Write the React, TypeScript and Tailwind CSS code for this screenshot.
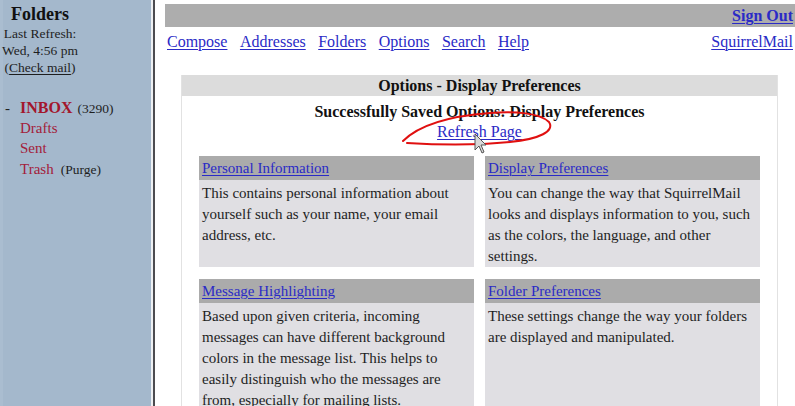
import React from "react";

const link = "text-[#2a2ac6] underline underline-offset-[2px] decoration-1";

function Card({ title, children }: { title: string; children: React.ReactNode }) {
  return (
    <div className="flex flex-col">
      <div className="h-[24px] shrink-0 bg-[#ababab] pl-[3px] flex items-center">
        <span className={link + " text-[15px] leading-[18px]"}>{title}</span>
      </div>
      <div className="flex-1 bg-[#e0dfe3] px-[3px] pt-[3px] text-[15px] leading-[21px] text-[#1e1e1e]">
        {children}
      </div>
    </div>
  );
}

export default function App() {
  return (
    <div className="relative w-[795px] h-[406px] overflow-hidden bg-white font-['Liberation_Serif','Times_New_Roman',serif] text-[#1e1e1e]">
      <div className="flex h-full">
        {/* Sidebar */}
        <div className="w-[151px] shrink-0 h-full bg-[#a4b8cc] border-l-[3px] border-l-[#aabdd0] flex flex-col">
          <div className="w-[74px] flex flex-col items-center text-center">
            <div className="text-[18px] font-bold leading-[20px] mt-[4px] text-[#111]">Folders</div>
            <div className="text-[13.5px] leading-[17px] mt-[1px] whitespace-nowrap">Last Refresh:</div>
            <div className="text-[13.5px] leading-[17px] whitespace-nowrap">Wed, 4:56 pm</div>
            <div className="text-[13.5px] leading-[17px] whitespace-nowrap">
              (<span className="underline underline-offset-[2px]">Check mail</span>)
            </div>
          </div>
          <div className="mt-[21px] flex flex-col text-[15px]">
            <div className="flex items-baseline h-[21px] leading-[21px]">
              <span className="w-[17px] pl-[2px] text-[#222]">-</span>
              <span className="font-bold text-[16px] text-[#a3162c]">INBOX</span>
              <span className="ml-[5px] text-[13.5px]">(3290)</span>
            </div>
            <div className="pl-[17px] h-[20px] leading-[20px] text-[#a3203a]">Drafts</div>
            <div className="pl-[17px] h-[21px] leading-[21px] text-[#a3203a]">Sent</div>
            <div className="pl-[17px] h-[21px] leading-[21px] flex items-baseline">
              <span className="text-[#a3203a]">Trash</span>
              <span className="ml-[7px] text-[13.5px]">(Purge)</span>
            </div>
          </div>
        </div>
        {/* Frame divider */}
        <div className="w-[2px] shrink-0 h-full bg-[#eef0f2]" />
        <div className="w-[2px] shrink-0 h-full bg-[#4c4c50]" />
        {/* Right frame */}
        <div className="flex-1 h-full pl-[10px] flex flex-col overflow-hidden">
          <div className="shrink-0 mt-[4px] h-[23px] bg-[#adadad] flex items-center justify-end pr-[2px]">
            <span className={link + " font-bold text-[16px] leading-[18px]"}>Sign Out</span>
          </div>
          <div className="shrink-0 mt-[6px] h-[18px] flex items-center justify-between pl-[2px] pr-[2px] text-[16px] leading-[18px]">
            <div className="flex gap-[12.5px]">
              <span className={link}>Compose</span>
              <span className={link}>Addresses</span>
              <span className={link}>Folders</span>
              <span className={link}>Options</span>
              <span className={link}>Search</span>
              <span className={link}>Help</span>
            </div>
            <span className={link}>SquirrelMail</span>
          </div>
          {/* Options box */}
          <div className="shrink-0 mt-[24px] ml-[16px] w-[597px] bg-[#e2e2e2] px-[1px] flex flex-col">
            <div className="h-[21px] shrink-0 bg-[#dcdcdc] flex items-center justify-center font-bold text-[16px] leading-[18px] text-[#111]">
              Options - Display Preferences
            </div>
            <div className="bg-white flex flex-col items-center pt-[6px] pb-[20px]">
              <div className="font-bold text-[16px] leading-[20px] text-[#111]">
                Successfully Saved Options: Display Preferences
              </div>
              <div className="text-[16px] leading-[20px]">
                <span className={link}>Refresh Page</span>
              </div>
              <div className="mt-[14px] w-full px-[17px] grid grid-cols-[275px_275px] gap-x-[11px] gap-y-[12px]">
                <Card title="Personal Information">
                  This contains personal information about yourself such as your name, your email address, etc.
                </Card>
                <Card title="Display Preferences">
                  You can change the way that SquirrelMail looks and displays information to you, such as the colors, the language, and other settings.
                </Card>
                <Card title="Message Highlighting">
                  Based upon given criteria, incoming messages can have different background colors in the message list. This helps to easily distinguish who the messages are from, especially for mailing lists.
                </Card>
                <Card title="Folder Preferences">
                  These settings change the way your folders are displayed and manipulated.
                </Card>
              </div>
            </div>
          </div>
        </div>
      </div>
      {/* Red hand-drawn annotation */}
      <svg className="absolute left-0 top-0 pointer-events-none" width="795" height="406">
        <path
          d="M403 141 C 420 124, 450 116, 490 113 C 515 111, 540 113, 549 122 C 555 131, 540 139, 510 142 C 480 145, 440 145, 407 143"
          fill="none"
          stroke="#e01010"
          strokeWidth="2"
          strokeLinecap="round"
        />
      </svg>
      {/* Mouse cursor */}
      <svg className="absolute left-[474px] top-[133px] pointer-events-none" width="14" height="22" viewBox="0 0 14 22">
        <path d="M1 1 L1 17 L5 13 L8 20 L10 19 L7 12 L12 12 Z" fill="#d8d8d8" stroke="#555" strokeWidth="1" strokeLinejoin="round" />
      </svg>
    </div>
  );
}
